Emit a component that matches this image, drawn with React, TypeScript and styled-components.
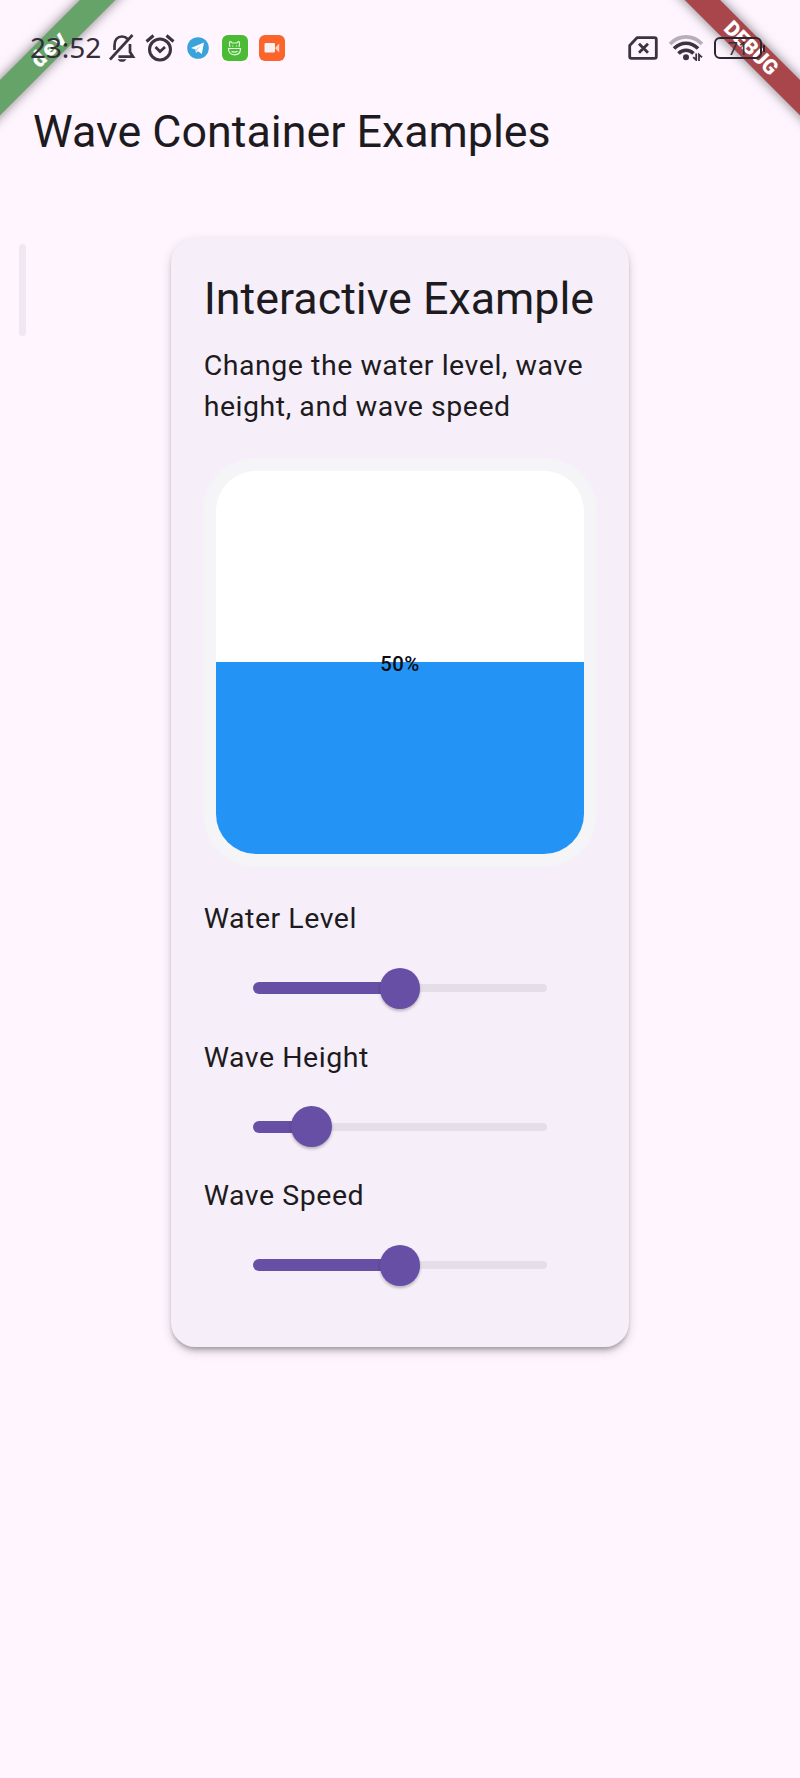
import React from "react";
import styled, { createGlobalStyle } from "styled-components";

const GlobalStyle = createGlobalStyle`
  * { box-sizing: border-box; }
  body { margin: 0; background: #fef5ff; }
`;

const Screen = styled.div`
  position: relative;
  width: 800px;
  height: 1778px;
  overflow: hidden;
  display: flex;
  flex-direction: column;
  background: #fef5ff;
  color: #1d1b20;
  font-family: Roboto, sans-serif;
`;

const StatusBar = styled.header`
  position: relative;
  z-index: 2;
  height: 74px;
  padding: 22px 34px 0 30px;
  display: flex;
  justify-content: space-between;
  color: #3b333f;
`;

const StatusGroup = styled.div`
  display: flex;
  align-items: center;
  height: 52px;
`;

const Clock = styled.span`
  width: 79px;
  padding-bottom: 2px;
  font: 400 28px/50px "Noto Sans", sans-serif;
  letter-spacing: -0.1px;
  color: #352e39;
`;

const Glyph = styled.svg<{ $gap?: number }>`
  display: block;
  flex: none;
  margin-left: ${(p) => p.$gap ?? 0}px;
`;

const Battery = styled.div`
  position: relative;
  display: flex;
  justify-content: center;
  width: 48px;
  height: 22px;
  margin: 0 4px 0 11px;
  border: 2px solid #2c2630;
  border-radius: 6px;
  font: 400 18px/19px "Noto Sans", sans-serif;
  color: #352e39;

  &::after {
    content: "";
    position: absolute;
    right: -5px;
    top: 6px;
    width: 2px;
    height: 7px;
    background: #2c2630;
  }
`;

const Banner = styled.div<{ $side: "left" | "right" }>`
  position: absolute;
  z-index: 1;
  top: 36.4px;
  ${(p) => p.$side}: -51.3px;
  width: 200px;
  height: 24.6px;
  transform: rotate(${(p) => (p.$side === "left" ? -45 : 45)}deg);
  background: ${(p) => (p.$side === "left" ? "#66a369" : "#a9464b")};
  box-shadow: 0 0 12px rgba(0, 0, 0, 0.5);
  color: #fff;
  text-align: center;
  font-size: ${(p) => (p.$side === "left" ? 22 : 20.8)}px;
  letter-spacing: ${(p) => (p.$side === "left" ? 2.2 : 0)}px;
  font-weight: 900;
  line-height: ${(p) => (p.$side === "left" ? 26 : 25)}px;
`;

const AppBar = styled.div`
  height: 114px;
  padding: 0 33px;
  display: flex;
  align-items: center;
`;

const Title = styled.h1`
  margin: 0;
  font-size: 44.8px;
  line-height: 57px;
  font-weight: 400;
  white-space: nowrap;
`;

const Body = styled.main`
  display: grid;
  grid-template-columns: 171px 458px;
  align-items: start;
  padding-top: 50px;
`;

const ScrollThumb = styled.div`
  width: 7.5px;
  height: 92px;
  margin: 6px 0 0 18.5px;
  border-radius: 4px;
  background: #efe7f1;
`;

const Card = styled.section`
  height: 1108.6px;
  padding: 32.4px 32.7px;
  border-radius: 24.4px;
  background: #f6effa;
  box-shadow: 0 6px 6px -3px rgba(0, 0, 0, 0.22), 0 2px 3px rgba(0, 0, 0, 0.1),
    0 4px 12px rgba(0, 0, 0, 0.14);
`;

const Text = styled.p`
  margin: 0;
  padding-top: 1.6px;
  font-size: 28.5px;
  line-height: 40.75px;
  letter-spacing: 0.53px;
  white-space: nowrap;
`;

const Description = styled(Text)`
  margin-top: 17px;
`;

const Tank = styled.div`
  display: flex;
  height: 407px;
  margin: 31.4px 0 31.8px;
  padding: 12.3px;
  border-radius: 52px;
  background: #f5f5f7;
  box-shadow: 0 0 3px #f5f5f7;
`;

const Water = styled.div<{ $level: number }>`
  flex: 1;
  display: grid;
  place-items: center;
  padding-top: 3px;
  border-radius: 40px;
  background: linear-gradient(
    to top,
    #2394f5 ${(p) => p.$level}%,
    #ffffff ${(p) => p.$level}%
  );
  color: #0b0b12;
  font-size: 20.4px;
  font-weight: 500;
  letter-spacing: 0.4px;
`;

const SliderRow = styled.div`
  height: 96.2px;
  padding: 0 48.9px;
  display: flex;
  align-items: center;
`;

const Active = styled.div<{ $value: number }>`
  width: ${(p) => p.$value}%;
  height: 12.2px;
  border-radius: 6px 0 0 6px;
  background: #664fa5;
`;

const Thumb = styled.div`
  z-index: 1;
  flex: none;
  width: 40.8px;
  height: 40.8px;
  margin: 0 -20.4px;
  border-radius: 50%;
  background: #664fa5;
  box-shadow: 0 2px 3px rgba(0, 0, 0, 0.25);
`;

const Inactive = styled.div`
  flex: 1;
  height: 8.2px;
  border-radius: 0 4px 4px 0;
  background: #e5dee8;
`;

function Slider({ label, value }: { label: string; value: number }) {
  return (
    <div>
      <Text>{label}</Text>
      <SliderRow>
        <Active $value={value} />
        <Thumb />
        <Inactive />
      </SliderRow>
    </div>
  );
}

const BellOff = () => (
  <Glyph width="27" height="28" viewBox="0 0 27 28" fill="none" stroke="currentColor" strokeWidth="2.7">
    <path d="M5.5 16V11.5C5.5 6 8.5 2.5 13 2.5c2.6 0 4.3 1 5.6 2.5M21 10v8l3 4.7H9.5" />
    <path d="M1 25.5 23.5 1" />
    <path d="M8.5 25.2h9c-1 1.7-2.6 2.6-4.5 2.6s-3.500-.9-4.500-2.600z" fill="currentColor" stroke="none" />
  </Glyph>
);

const Alarm = () => (
  <Glyph $gap={9} width="30" height="28" viewBox="0 0 30 28" fill="none" stroke="currentColor" strokeWidth="3">
    <circle cx="15" cy="15.500" r="10.500" />
    <path d="M1.500 7.500 8.500 1.500M28.500 7.500 21.500 1.500" />
    <path d="m10.500 13 4.500 4.500 5-4.500" strokeWidth="2.800" />
  </Glyph>
);

const Telegram = () => (
  <Glyph $gap={12} width="22" height="22" viewBox="0 0 22 22">
    <circle cx="11" cy="11" r="10.800" fill="#3aa3dc" />
    <path d="M4 10.900 17 5.500 14.800 17 11 14.200 9 16.100 8.500 12.600z" fill="#fff" />
    <path d="m8.500 12.600 5.500-4.300-4 5.200-.9 2.500z" fill="#b9dcef" />
  </Glyph>
);

const GreenApp = () => (
  <Glyph $gap={13} width="26" height="26" viewBox="0 0 26 26" fill="none" stroke="#e4f8df" strokeWidth="1.200">
    <rect width="26" height="26" rx="6" fill="#4bbb35" stroke="none" />
    <path d="M8 12c-.6-2.500-.6-5 .2-5.500.8.200 1.500.8 2 1.500h4.600c.5-.7 1.200-1.300 2-1.500.8.500.8 3 .2 5.500" />
    <path d="M6.500 13.500h12c0 4-2.300 6.300-6 6.300s-6-2.300-6-6.300zM9.500 16.300c1.700 1 4.300 1 6 0" />
    <path d="M10 11h1.300M13.800 11h1.300" />
  </Glyph>
);

const Recorder = () => (
  <Glyph $gap={11} width="26" height="26" viewBox="0 0 26 26">
    <rect width="26" height="26" rx="6" fill="#fb652b" />
    <rect x="5.500" y="8" width="10.500" height="9.500" rx="1" fill="#f6f2f2" />
    <path d="m16.500 12.500 3.700-4v9l-3.700-3.800z" fill="#ffd4c2" />
  </Glyph>
);

const NoSim = () => (
  <Glyph width="30" height="24" viewBox="0 0 30 24" fill="none" stroke="currentColor" strokeWidth="2.800" strokeLinejoin="round">
    <path d="M9 1.700h17.500q1.800 0 1.800 1.800v17q0 1.800-1.800 1.800h-23q-1.800 0-1.800-1.800V9.500z" />
    <path d="m11 7.800 9 9M20 7.800l-9 9" />
  </Glyph>
);

const Wifi = () => (
  <Glyph $gap={11} width="34" height="26" viewBox="0 0 34 26" fill="none" stroke="currentColor" strokeWidth="3.600">
    <path d="M1 9C10-.5 24-.5 33 9" stroke="#b7aeb9" />
    <path d="M5 13.500c7-7 17-7 24 0M9.500 18.500c4.300-4.300 10.700-4.300 15 0" />
    <circle cx="17" cy="22.300" r="3" fill="currentColor" stroke="none" />
    <path d="M27.200 18.500v6.500l-3-2.800M30 26v-6.500l3 2.800" strokeWidth="1.800" />
  </Glyph>
);

export default function App() {
  return (
    <Screen>
      <GlobalStyle />
      <Banner $side="left">dev</Banner>
      <Banner $side="right">DEBUG</Banner>
      <StatusBar>
        <StatusGroup>
          <Clock>23:52</Clock>
          <BellOff />
          <Alarm />
          <Telegram />
          <GreenApp />
          <Recorder />
        </StatusGroup>
        <StatusGroup>
          <NoSim />
          <Wifi />
          <Battery>71</Battery>
        </StatusGroup>
      </StatusBar>
      <AppBar>
        <Title>Wave Container Examples</Title>
      </AppBar>
      <Body>
        <ScrollThumb />
        <Card>
          <Title as="h2">Interactive Example</Title>
          <Description>
            Change the water level, wave
            <br />
            height, and wave speed
          </Description>
          <Tank>
            <Water $level={50}>50%</Water>
          </Tank>
          <Slider label="Water Level" value={50} />
          <Slider label="Wave Height" value={20} />
          <Slider label="Wave Speed" value={50} />
        </Card>
      </Body>
    </Screen>
  );
}
